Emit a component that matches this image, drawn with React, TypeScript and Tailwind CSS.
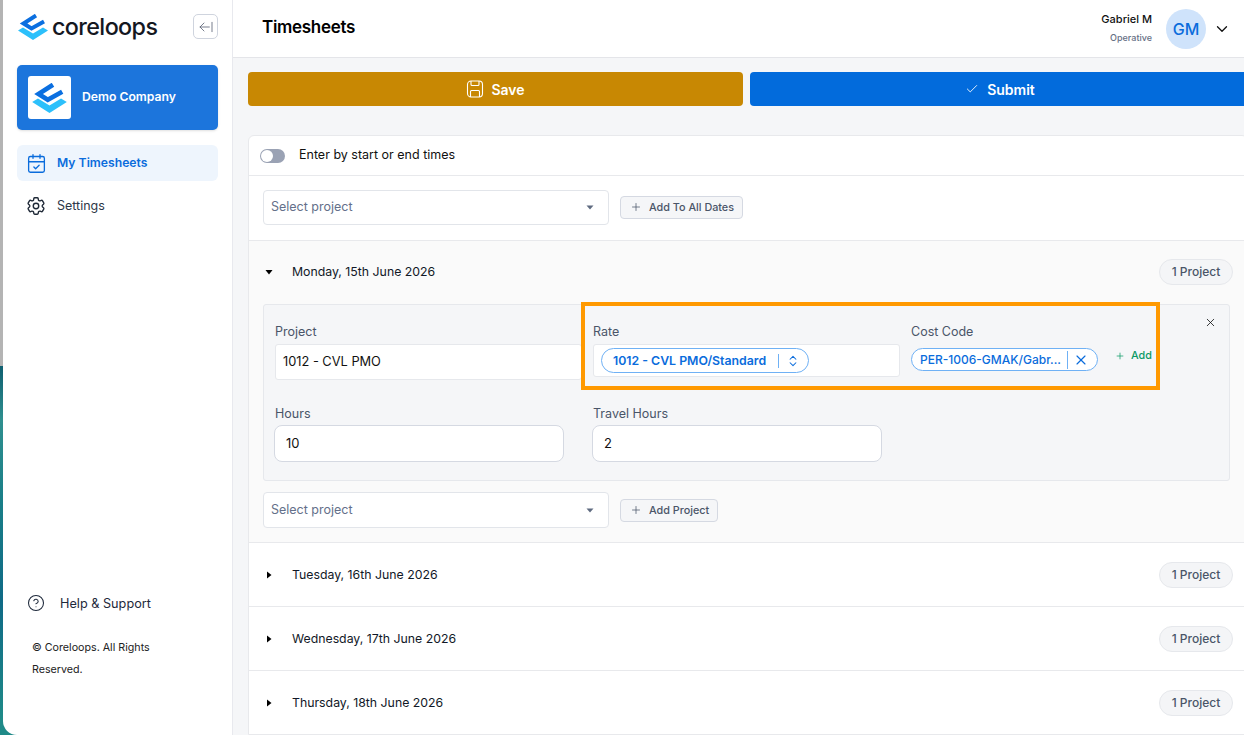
import React from 'react';
import {
  ArrowLeftFromLine,
  CalendarCheck,
  Check,
  ChevronDown,
  ChevronsUpDown,
  CircleHelp,
  Plus,
  X,
} from 'lucide-react';
import { HiOutlineCog6Tooth } from 'react-icons/hi2';

const Logo = ({ className }: { className: string }) => (
  <svg viewBox="0 0 30 26" className={className}>
    <path d="M18 1.5 5.5 9.5 13.5 14.5 26 7.500" fill="none" stroke="#0b6fe0" strokeWidth="4" strokeLinejoin="miter" />
    <path d="M0 16.500 5 13.500 15 19.500 25 13.500 30 16.500 15 26Z" fill="#2cc0fb" />
  </svg>
);

const Caret = ({ open }: { open: boolean }) => (
  <svg viewBox="0 0 8 8" className="w-2 h-2 text-black">
    {open ? <path d="M0.500 2h7L4 6.500Z" fill="currentColor" /> : <path d="M2 0.500v7L6.500 4Z" fill="currentColor" />}
  </svg>
);

const SaveIcon = () => (
  <svg viewBox="0 0 18 18" fill="none" stroke="currentColor" strokeWidth="1.100" className="w-[18px] h-[18px]">
    <rect x="1.500" y="1" width="15" height="16" rx="3.500" />
    <path d="M5 1v3.500a1 1 0 0 0 1 1h6a1 1 0 0 0 1-1V1" />
    <path d="M4.500 17v-5.500a1 1 0 0 1 1-1h7a1 1 0 0 1 1 1V17" />
  </svg>
);

const SelectProject = ({ w }: { w: string }) => (
  <div className={`${w} flex items-center justify-between bg-white border border-[#e2e5ea] rounded pl-[7px] pr-[14px]`}>
    <span className="text-[12.500px] text-[#64708a]">Select project</span>
    <svg viewBox="0 0 8 5" className="w-2 h-[5px] text-[#5f6b80]">
      <path d="M0.500 0.500h7L4 4.500Z" fill="currentColor" />
    </svg>
  </div>
);

const AddButton = ({ label, w }: { label: string; w: string }) => (
  <div className={`${w} h-[23px] flex items-center gap-[7px] pl-[9px] bg-[#f5f6f8] border border-[#d5d9e2] rounded text-[10.800px] font-medium text-[#4a5568]`}>
    <Plus size={12} strokeWidth={1.5} />
    <span className="pt-[2px]">{label}</span>
  </div>
);

const Badge = () => (
  <span className="w-[74px] h-[26px] flex items-center justify-center rounded-full bg-[#f4f5f7] border border-[#e6e8ec] text-[12px] font-medium text-[#4a5568]">
    1 Project
  </span>
);

const DayRow = ({ label }: { label: string }) => (
  <div className="h-[64px] flex items-center justify-between pl-4 pr-[14px] border-t border-[#e8e9ec]">
    <div className="flex items-center gap-[19px]">
      <Caret open={false} />
      <span className="pt-px text-[12.300px] text-[#111827]">{label}</span>
    </div>
    <Badge />
  </div>
);

const App = () => {
  return (
    <div className="w-[1244px] h-[735px] overflow-hidden flex pl-[3px] bg-[linear-gradient(to_bottom,#b4b4b4_366px,#0f5f70_366px,#2f8f8f_420px,#1a7f88_500px,#0f6a86_600px,#1f8a88_720px)] font-['Inter',sans-serif]">
      {/* Sidebar */}
      <aside className="w-[230px] shrink-0 flex flex-col bg-white border-r border-[#e8e9ee] rounded-bl-[14px] px-[14px] pb-[54px]">
        <div className="h-[65px] pt-[14px] flex items-start">
          <Logo className="w-[30px] h-[26px] ml-[1px]" />
          <span className="ml-[4px] -mt-[2px] text-[23.300px] leading-[29px] font-medium tracking-[-0.6px] text-[#14171f]">coreloops</span>
          <div className="ml-auto w-[25px] h-[25px] flex items-center justify-center border border-[#cfd4de] rounded-[5px] text-[#5b6476]">
            <ArrowLeftFromLine size={16} strokeWidth={1.25} />
          </div>
        </div>

        <div className="h-[65px] flex items-center gap-[11px] px-[11px] bg-[#1c75dc] rounded-[5px] shadow-sm">
          <div className="w-[43px] h-[43px] flex items-center justify-center bg-white rounded-[3px]">
            <Logo className="w-[35px] h-[30px]" />
          </div>
          <span className="text-[12.200px] font-semibold text-white">Demo Company</span>
        </div>

        <div className="mt-[15px] h-9 flex items-center gap-[10px] pl-[9px] bg-[#eef5fd] rounded-md text-[#0a6cdc]">
          <CalendarCheck size={21} strokeWidth={1.5} />
          <span className="text-[12.200px] font-semibold">My Timesheets</span>
        </div>
        <div className="mt-[14px] h-[21px] flex items-center gap-[10px] pl-[9px] text-[#1f2937]">
          <HiOutlineCog6Tooth size={22} className="-ml-[1px]" />
          <span className="pt-px text-[12.500px] text-[#2d3748]">Settings</span>
        </div>

        <div className="mt-auto">
          <div className="flex items-center gap-[15px] pl-[10px] text-[#1e293b]">
            <CircleHelp size={18} strokeWidth={1.4} />
            <span className="pt-px text-[12.700px] font-normal">Help &amp; Support</span>
          </div>
          <p className="mt-[24px] pl-[15px] w-[150px] text-[10.700px] leading-[22px] text-[#222]">
            © Coreloops. All Rights Reserved.
          </p>
        </div>
      </aside>

      {/* Main */}
      <main className="flex-1 min-w-0 overflow-hidden bg-[#f5f6f8]">
        <header className="h-[58px] flex items-center justify-between pl-[29px] pr-[13px] bg-white border-b border-[#e4e5e9]">
          <h1 className="-mt-[1px] text-[17px] font-semibold tracking-[-0.3px] text-black">Timesheets</h1>
          <div className="flex items-center">
            <div className="-mt-[1px] flex flex-col items-end gap-[6px]">
              <span className="text-[11px] leading-[14px] font-medium text-[#111]">Gabriel M</span>
              <span className="text-[9px] leading-[12px] font-medium text-[#667085]">Operative</span>
            </div>
            <div className="ml-[14px] w-10 h-10 flex items-center justify-center rounded-full bg-[#cfe3fb] text-[16px] font-medium text-[#0a6cdc]">
              GM
            </div>
            <ChevronDown size={18} className="ml-[7px] text-[#111]" strokeWidth={1.75} />
          </div>
        </header>

        <div className="pl-[15px] w-[1015px]">
          <div className="mt-[14px] flex gap-[7px]">
            <div className="w-[495px] shrink-0 h-[34px] flex items-center justify-center gap-[7px] bg-[#c88803] rounded-[4px] text-white text-[14px] font-semibold">
              <SaveIcon />
              Save
            </div>
            <div className="w-[500px] shrink-0 h-[34px] flex items-center justify-center gap-[8px] bg-[#026bdc] rounded-[4px] text-white text-[14px] font-semibold">
              <Check size={14} strokeWidth={1.5} />
              Submit
            </div>
          </div>

          <section className="mt-[29px] bg-white border border-[#e8e9ec] rounded-t-md">
            <div className="h-[39px] flex items-center gap-[14px] pl-[11px]">
              <div className="w-[25px] h-[14px] flex items-center pl-[1px] rounded-full bg-[#9aa2b4]">
                <div className="w-3 h-3 rounded-full bg-white" />
              </div>
              <span className="text-[12.500px] text-[#111]">Enter by start or end times</span>
            </div>

            <div className="h-[65px] flex items-center gap-[11px] pl-[14px] pb-[2px] border-t border-[#e8e9ec]">
              <SelectProject w="w-[346px] h-[35px]" />
              <AddButton label="Add To All Dates" w="w-[123px]" />
            </div>

            {/* Monday, expanded */}
            <div className="h-[302px] flex flex-col bg-[#fafafa] border-t border-[#e8e9ec] pl-[14px] pr-[14px]">
              <div className="h-[63px] pb-[1px] shrink-0 flex items-center justify-between">
                <div className="flex items-center gap-[19px] pl-[2px]">
                  <Caret open />
                  <span className="text-[12.300px] text-[#111827]">Monday, 15th June 2026</span>
                </div>
                <Badge />
              </div>

              <div className="relative w-[967px] h-[177px] shrink-0 bg-[#f5f6f8] border border-[#e6e8ec] rounded-[3px] px-[11px] pt-[19px]">
                <div className="flex gap-[11px] items-start">
                  <div className="w-[307px]">
                    <p className="text-[12.500px] leading-[16px] text-[#4a5568]">Project</p>
                    <div className="mt-[4px] h-9 flex items-center pl-[7px] bg-white border border-[#e6e8ec] rounded-[3px] text-[12.800px] text-[#111]">
                      1012 - CVL PMO
                    </div>
                  </div>
                  <div className="w-[307px]">
                    <p className="text-[12.500px] leading-[16px] text-[#4a5568]">Rate</p>
                    <div className="mt-[4px] h-[33px] flex items-center pl-[7px] bg-white border border-[#e6e8ec] rounded-[3px]">
                      <div className="h-[25px] w-[208px] flex items-center pl-[11px] rounded-full border border-[#6fb1f5] bg-white text-[12.300px] font-semibold text-[#0a6cdc]">
                        <span className="pt-px w-[165px] whitespace-nowrap">1012 - CVL PMO/Standard</span>
                        <span className="w-px h-[14px] bg-[#6fb1f5]" />
                        <ChevronsUpDown size={14} className="ml-[7px] text-[#0a6cdc]" strokeWidth={1.75} />
                      </div>
                    </div>
                  </div>
                  <div>
                    <p className="text-[12.500px] leading-[16px] text-[#4a5568]">Cost Code</p>
                    <div className="mt-[8px] flex items-center">
                      <div className="h-[23px] w-[187px] flex items-center pl-2 rounded-full border border-[#6fb1f5] bg-white text-[12px] font-medium text-[#0a6cdc]">
                        <span className="w-[147px] whitespace-nowrap">PER-1006-GMAK/Gabr...</span>
                        <span className="w-px h-[18px] bg-[#6fb1f5]" />
                        <X size={16} className="ml-[5px]" strokeWidth={1.75} />
                      </div>
                      <div className="ml-[17px] mb-[7px] flex items-center gap-[6px] text-[10.800px] font-medium text-[#0b9a66]">
                        <Plus size={10} strokeWidth={1.75} />
                        Add
                      </div>
                    </div>
                  </div>
                </div>

                <div className="mt-[26px] flex gap-[28px]">
                  <div className="w-[290px]">
                    <p className="text-[12.500px] leading-[16px] text-[#4a5568]">Hours</p>
                    <div className="-ml-px mr-px mt-[3px] h-[37px] flex items-center pl-[11px] pt-px bg-white border border-[#d5d9e2] rounded-lg text-[13px] text-[#111]">10</div>
                  </div>
                  <div className="w-[290px]">
                    <p className="text-[12.500px] leading-[16px] text-[#4a5568]">Travel Hours</p>
                    <div className="-ml-px mr-px mt-[3px] h-[37px] flex items-center pl-[11px] pt-px bg-white border border-[#d5d9e2] rounded-lg text-[13px] text-[#111]">2</div>
                  </div>
                </div>

                <X size={13} className="absolute right-[12px] top-[11px] text-[#111]" strokeWidth={1.5} />
                {/* annotation drawn over the screenshot */}
                <div className="absolute left-[317px] top-[-3px] w-[578.500px] h-[88px] border-4 border-[#ff9900] pointer-events-none" />
              </div>

              <div className="mt-[11px] flex items-center gap-[11px]">
                <SelectProject w="w-[346px] h-9" />
                <AddButton label="Add Project" w="w-[98px]" />
              </div>
            </div>

            <DayRow label="Tuesday, 16th June 2026" />
            <DayRow label="Wednesday, 17th June 2026" />
            <DayRow label="Thursday, 18th June 2026" />
          </section>
        </div>
      </main>
    </div>
  );
};

export default App;
